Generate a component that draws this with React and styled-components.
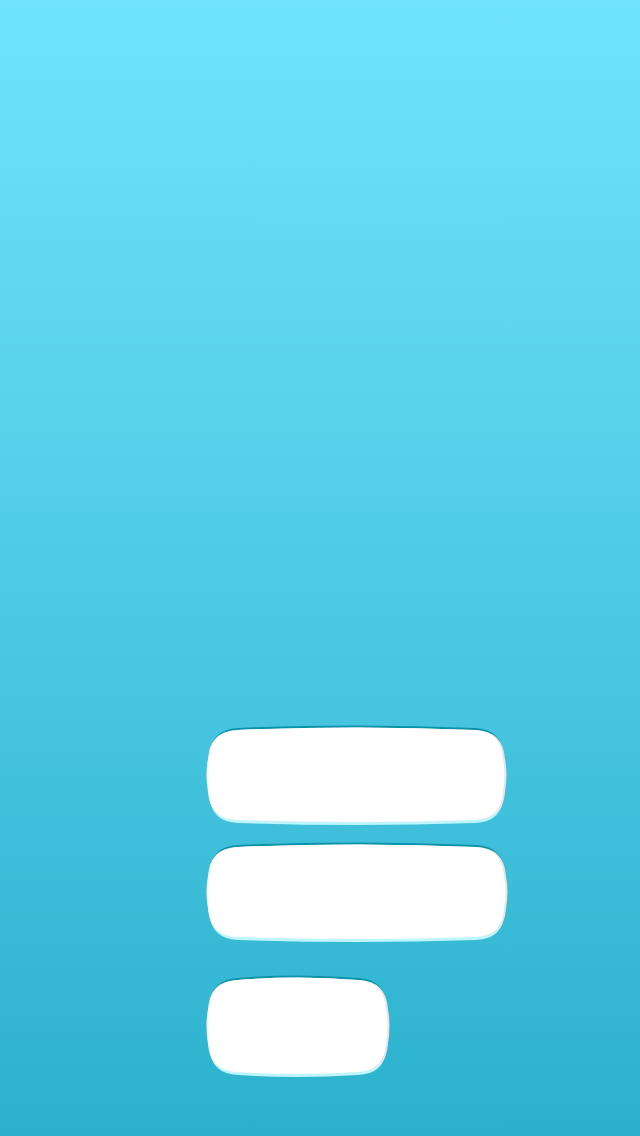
import React from 'react';
import styled, { createGlobalStyle } from 'styled-components';

const GlobalStyle = createGlobalStyle`
  html, body {
    margin: 0;
    padding: 0;
    height: 100%;
  }
  #root {
    height: 100%;
  }
`;

const Screen = styled.div`
  width: 640px;
  height: 1136px;
  background: linear-gradient(180deg, #70e4ff 0%, #4cc8e4 55%, #2bb1cc 100%);
  display: flex;
  flex-direction: column;
  justify-content: flex-end;
  padding: 0 0 62px 208px;
  box-sizing: border-box;
  font-family: 'Liberation Sans', Arial, sans-serif;
`;

const Menu = styled.div`
  display: flex;
  flex-direction: column;
  align-items: flex-start;
`;

const Button = styled.button`
  display: block;
  border: none;
  background: none;
  padding: 0;
  margin: 0 0 ${(p) => p.$gap}px 0;
  width: ${(p) => p.$w}px;
  height: ${(p) => p.$h}px;
  cursor: pointer;

  svg {
    display: block;
    overflow: visible;
  }
`;

// bulged pill outline, slightly convex on every side
const blob = (w, h) => {
  const m = w / 2;
  const c = h / 2;
  return [
    `M 30,3`,
    `Q ${m},-2 ${w - 30},3`,
    `Q ${w - 3},4 ${w - 1},32`,
    `Q ${w + 2},${c} ${w - 1},${h - 30}`,
    `Q ${w - 3},${h - 3} ${w - 30},${h - 2}`,
    `Q ${m},${h + 2} 30,${h - 2}`,
    `Q 3,${h - 3} 1,${h - 30}`,
    `Q -2,${c} 1,32`,
    `Q 3,4 30,3 Z`,
  ].join(' ');
};

const BlobButton = ({ w, h, gap }) => {
  const d = blob(w, h);
  return (
    <Button $w={w} $h={h} $gap={gap}>
      <svg width={w} height={h} viewBox={`0 0 ${w} ${h}`}>
        <path d={d} fill="#0a93a8" transform="translate(0,-2)" />
        <path d={d} fill="#bdf6fc" transform="translate(0,3)" />
        <path d={d} fill="#e6e6e6" transform="translate(1,0)" />
        <path d={d} fill="#ffffff" transform="translate(-1,0)" />
      </svg>
    </Button>
  );
};

const items = [
  { id: 1, w: 297, h: 95, gap: 22 },
  { id: 2, w: 298, h: 95, gap: 38 },
  { id: 3, w: 180, h: 97, gap: 0 },
];

export default function App() {
  return (
    <>
      <GlobalStyle />
      <Screen>
        <Menu>
          {items.map((it) => (
            <BlobButton key={it.id} w={it.w} h={it.h} gap={it.gap} />
          ))}
        </Menu>
      </Screen>
    </>
  );
}
